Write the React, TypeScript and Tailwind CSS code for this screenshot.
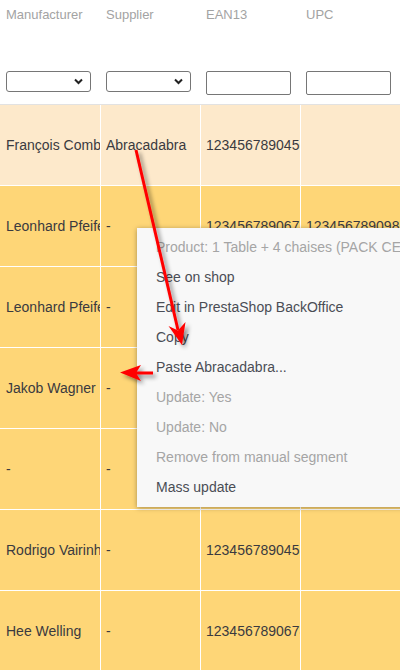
import React from "react";

const rows: string[][] = [
  ["François Combes", "Abracadabra", "1234567890456", ""],
  ["Leonhard Pfeifer", "-", "1234567890678", "1234567890987"],
  ["Leonhard Pfeifer", "-", "", ""],
  ["Jakob Wagner", "-", "", ""],
  ["-", "-", "", ""],
  ["Rodrigo Vairinho", "-", "1234567890456", ""],
  ["Hee Welling", "-", "1234567890678", ""],
];

const menu: { label: string; disabled?: boolean }[] = [
  { label: "Product: 1 Table + 4 chaises (PACK CENTRE)", disabled: true },
  { label: "See on shop" },
  { label: "Edit in PrestaShop BackOffice" },
  { label: "Copy" },
  { label: "Paste Abracadabra..." },
  { label: "Update: Yes", disabled: true },
  { label: "Update: No", disabled: true },
  { label: "Remove from manual segment", disabled: true },
  { label: "Mass update" },
];

function FakeSelect() {
  return (
    <div className="relative h-[21px] w-[85px] rounded-[3px] border border-[#767676] bg-white">
      <svg
        className="absolute right-[7px] top-[6px]"
        width="9"
        height="7"
        viewBox="0 0 9 7"
      >
        <path d="M1 1.5 L4.5 5 L8 1.5" fill="none" stroke="#222" strokeWidth="2" />
      </svg>
    </div>
  );
}

function FakeInput() {
  return <div className="h-[24px] w-[85px] rounded-[2px] border border-[#767676] bg-white" />;
}

export default function App() {
  const headers = ["Manufacturer", "Supplier", "EAN13", "UPC"];
  return (
    <div
      className="relative h-[670px] w-[400px] overflow-hidden bg-white"
      style={{ fontFamily: '"Liberation Sans", Arial, sans-serif' }}
    >
      {/* header */}
      <div className="flex h-[105px] border-b border-[#e2e2e2]">
        {headers.map((h, i) => (
          <div key={h} className="flex w-[100px] shrink-0 flex-col px-[6px] pt-[7px]">
            <div className="h-[16px] text-[13px] leading-[16px] text-[#a3a3a3]">{h}</div>
            <div className="mt-[48px]">{i < 2 ? <FakeSelect /> : <FakeInput />}</div>
          </div>
        ))}
      </div>

      {/* rows */}
      {rows.map((r, ri) => (
        <div
          key={ri}
          className={`flex h-[81px] border-b border-white ${ri === 0 ? "bg-[#fde9cb]" : "bg-[#fed677]"}`}
        >
          {r.map((c, ci) => (
            <div
              key={ci}
              className={`flex w-[100px] shrink-0 items-center overflow-hidden whitespace-nowrap text-[14px] text-[#3a3a3f] ${
                ci === 0 ? "pl-[6px]" : "border-l border-white pl-[5px]"
              }`}
            >
              {c}
            </div>
          ))}
        </div>
      ))}

      {/* context menu */}
      <div className="absolute left-[137px] top-[228px] w-[290px] bg-[#f8f8f8] pb-[5px] pt-[4px] shadow-[0_1px_5px_rgba(0,0,0,0.35)]">
        {menu.map((m) => (
          <div
            key={m.label}
            className={`flex h-[30px] items-center whitespace-nowrap pl-[19px] text-[14px] ${
              m.disabled ? "text-[#a5a5a5]" : "text-[#4a4d55]"
            }`}
          >
            {m.label}
          </div>
        ))}
      </div>

      {/* arrows */}
      <svg
        className="pointer-events-none absolute left-0 top-0"
        width="400"
        height="670"
        viewBox="0 0 400 670"
      >
        <defs>
          <filter id="sh" x="-50%" y="-50%" width="200%" height="200%">
            <feDropShadow dx="3" dy="3" stdDeviation="2" floodColor="#000" floodOpacity="0.45" />
          </filter>
        </defs>
        <g filter="url(#sh)" fill="#ff0000" stroke="none">
          <line x1="136" y1="150" x2="178" y2="330" stroke="#ff0000" strokeWidth="3" />
          <polygon points="182,345 168.5,326 178,330.5 185.5,322" />
          <line x1="153" y1="373" x2="134" y2="373" stroke="#ff0000" strokeWidth="3" />
          <polygon points="120,372.5 141,365 136,373 141,381" />
        </g>
      </svg>
    </div>
  );
}
